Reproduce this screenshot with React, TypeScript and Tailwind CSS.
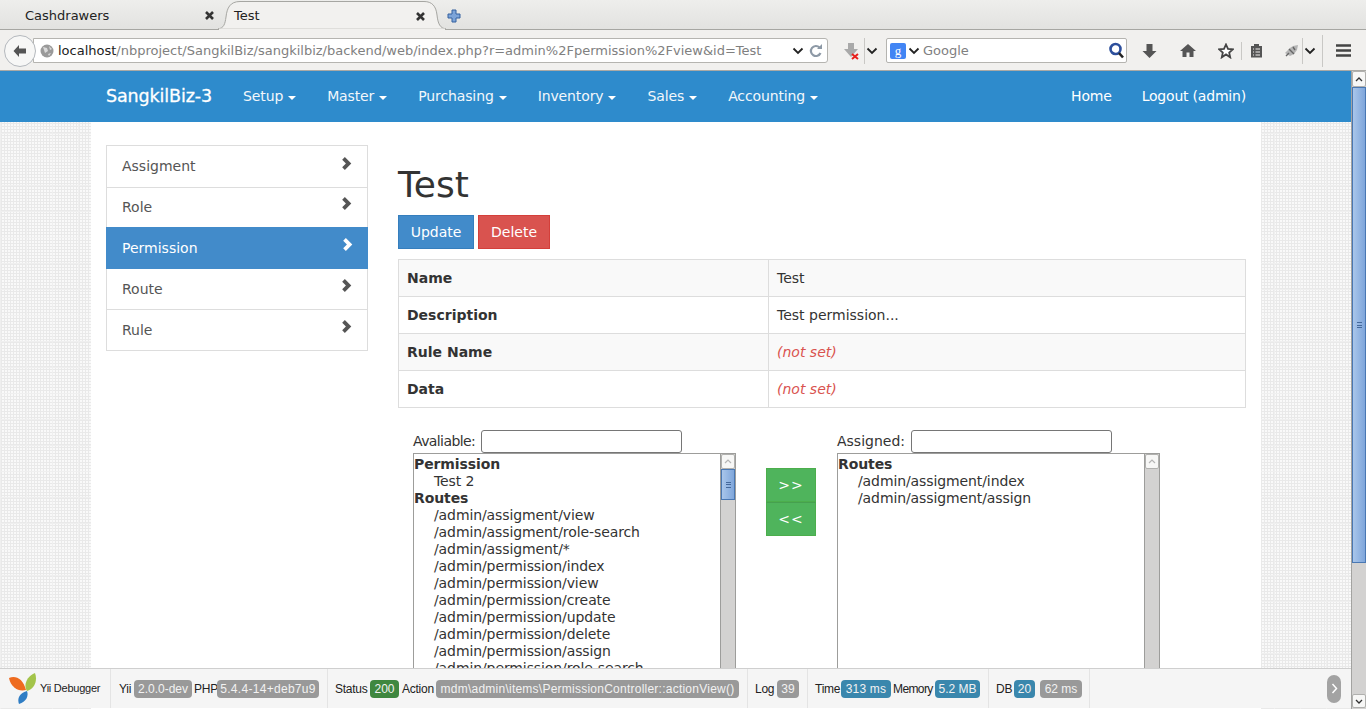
import type { ReactNode } from "react";

const menus = ["Setup", "Master", "Purchasing", "Inventory", "Sales", "Accounting"];
const sideItems = ["Assigment", "Role", "Permission", "Route", "Rule"];
const routes = [
  "/admin/assigment/view",
  "/admin/assigment/role-search",
  "/admin/assigment/*",
  "/admin/permission/index",
  "/admin/permission/view",
  "/admin/permission/create",
  "/admin/permission/update",
  "/admin/permission/delete",
  "/admin/permission/assign",
  "/admin/permission/role-search",
];

function CloseX() {
  return (
    <svg width="11" height="11" viewBox="0 0 11 11" className="shrink-0">
      <path d="M2 2l7 7M9 2l-7 7" stroke="#333" strokeWidth="2.6" />
    </svg>
  );
}

function Chevron({ color }: { color: string }) {
  return (
    <svg width="12" height="15" viewBox="0 0 11 14" className="mt-[-7px] mr-[-1px]">
      <path d="M1 3.500L3.500 1l6 6-6 6L1 10.500 4.500 7z" fill={color} />
    </svg>
  );
}

function DropArrow() {
  return (
    <svg width="12" height="8" viewBox="0 0 12 8">
      <path d="M1.500 1.500L6 6l4.500-4.500" stroke="#222" strokeWidth="1.800" fill="none" />
    </svg>
  );
}

function TabStrip() {
  return (
    <div className="h-[30px] flex items-stretch bg-[linear-gradient(#eeeeec,#e2e2e0)] border-b border-[#a6a6a2] text-[13px] text-[#222]">
      <div className="w-[218px] pl-[25px] pr-[3px] flex items-center justify-between pt-[2px]">
        <span>Cashdrawers</span>
        <CloseX />
      </div>
      <div className="relative w-[228px] h-[30px] pl-[16px] pr-[20px] flex items-center justify-between pt-[2px]">
        <svg width="228" height="30" viewBox="0 0 228 30" className="absolute left-0 top-0">
          <path d="M0 29C6 28 7 24 8 17 9 8 12 1.500 22 1.500H206C214 1.500 218 6 219 15 220 24 222 28 228 29z" fill="#f2f1ef" stroke="#a6a6a2" />
          <path d="M1 29.500H227" stroke="#f1f0ee" strokeWidth="2" />
        </svg>
        <span className="relative">Test</span>
        <span className="relative flex"><CloseX /></span>
      </div>
      <div className="ml-[1px] flex items-center pt-[2px]">
        <svg width="14" height="14" viewBox="0 0 14 14">
          <path d="M5 1h4v4h4v4H9v4H5V9H1V5h4z" fill="#7da4d8" stroke="#34609f" strokeWidth="1" />
        </svg>
      </div>
    </div>
  );
}

function Toolbar() {
  return (
    <div className="h-[41px] flex items-center bg-[#f1f0ee] border-b border-[#aaa9a5] pl-[4px] pt-[1px] text-[13px]">
      <div className="z-10 w-[32px] h-[32px] rounded-full bg-[#f7f7f6] border border-[#b4b8bd] flex items-center justify-center shrink-0">
        <svg width="16" height="14" viewBox="0 0 16 14">
          <path d="M7 1L1.500 7 7 13V9.500h7v-5H7z" fill="#555" />
        </svg>
      </div>
      <div className="ml-[-3px] w-[795px] h-[25px] bg-white border border-[#b5b4b0] rounded-r-[3px] flex items-center pl-[6px] pr-[4px] text-[#808080] whitespace-nowrap">
        <svg width="14" height="14" viewBox="0 0 14 14" className="shrink-0 mr-[4px]">
          <circle cx="7" cy="7" r="6.500" fill="#9a9a9a" />
          <path d="M3 3l4 1 1 3-3 2zM9 2l3 3-2 1zM8 10l3-1-2 3z" fill="#dadada" />
        </svg>
        <span className="text-[#222]">localhost</span>
        <span>/nbproject/SangkilBiz/sangkilbiz/backend/web/index.php?r=admin%2Fpermission%2Fview&amp;id=Test</span>
        <div className="ml-auto flex items-center gap-[5px]">
          <DropArrow />
          <svg width="14" height="14" viewBox="0 0 14 14">
            <path d="M11.500 9A5 5 0 1 1 10.500 3.500" stroke="#8d99a6" strokeWidth="2.200" fill="none" />
            <path d="M8 5h5V0z" fill="#8d99a6" />
          </svg>
        </div>
      </div>
      <svg width="18" height="18" viewBox="0 0 18 18" className="ml-[14px] shrink-0">
        <path d="M6 1h6v6h4l-7 8-7-8h4z" fill="#a9a9a9" />
        <path d="M10 12l6 5M16 12l-6 5" stroke="#e8201c" strokeWidth="2" />
      </svg>
      <div className="ml-[4px] h-[26px] border-l border-[#c9c8c5] pl-[1px] flex items-center"><DropArrow /></div>
      <div className="ml-[8px] w-[241px] h-[25px] bg-white border border-[#b5b4b0] rounded-[2px] flex items-center pl-[3px] pr-[1px] text-[#808080] shrink-0">
        <div className="w-[16px] h-[16px] rounded-[2px] bg-[#4285f4] text-white text-[13px] leading-[15px] text-center font-['Liberation_Serif',serif]">g</div>
        <div className="ml-[2px] mr-[3px] flex"><DropArrow /></div>
        <span className="text-[13px]">Google</span>
        <svg width="17" height="17" viewBox="0 0 16 17" className="ml-auto">
          <circle cx="7" cy="7" r="5" fill="#fff" stroke="#2d4f9c" strokeWidth="2.600" />
          <path d="M10.500 11l4 4.500" stroke="#222" strokeWidth="2.600" />
        </svg>
      </div>
      <svg width="15" height="16" viewBox="0 0 14 16" className="ml-[15px] shrink-0">
        <path d="M4 1h6v7h4l-7 7-7-7h4z" fill="#555" />
      </svg>
      <svg width="16" height="15" viewBox="0 0 16 15" className="ml-[23px] shrink-0">
        <path d="M8 1L0 8h2.500v6h4V9.500h3V14h4V8H16z" fill="#555" />
      </svg>
      <svg width="16" height="16" viewBox="0 0 16 16" className="ml-[22px] shrink-0">
        <path d="M8 1.500l2 4.400 4.800.5-3.600 3.200 1 4.700L8 11.400l-4.200 2.900 1-4.700L1.200 6.400 6 5.900z" fill="#fff" stroke="#444" strokeWidth="1.800" />
      </svg>
      <div className="ml-[7px] h-[18px] border-l border-[#c9c8c5]" />
      <svg width="13" height="15" viewBox="0 0 13 15" className="ml-[8px] shrink-0">
        <path d="M1 3h3V1h5v2h3v11.500H1z" fill="#555" />
        <path d="M3 6h1M3 9h1M3 12h1M5.500 6H10M5.500 9H10M5.500 12H10" stroke="#f1f0ee" strokeWidth="1.200" />
      </svg>
      <svg width="16" height="14" viewBox="0 0 16 14" className="ml-[21px] shrink-0">
        <path d="M1 9l5-5 3-2 5-1-1 5-3 4-4 2z" fill="#b4b4b4" />
        <path d="M5 5l5 5M9 3l2 3M2 12l3-3" stroke="#666" strokeWidth="1.400" />
      </svg>
      <div className="ml-[2px] h-[26px] border-l border-[#c9c8c5] pl-[1px] flex items-center"><DropArrow /></div>
      <div className="ml-[6px] h-[32px] border-l border-[#c9c8c5]" />
      <svg width="15" height="13" viewBox="0 0 15 13" className="ml-[13px] shrink-0">
        <path d="M0 1.500h15M0 6.500h15M0 11.500h15" stroke="#444" strokeWidth="2.600" />
      </svg>
    </div>
  );
}

function Navbar() {
  return (
    <div className="h-[51px] bg-[#2e8bcc] flex items-center pl-[106px] pr-[105px] text-[14px] tracking-[-0.12px] text-white">
      <span className="w-[137px] shrink-0 text-[17.500px] [-webkit-text-stroke:0.3px_white]">SangkilBiz-3</span>
      <div className="flex gap-[31px]">
        {menus.map((m) => (
          <div key={m} className="flex items-center gap-[5px]">
            <span className="text-[#f2f7fb]">{m}</span>
            <span className="w-0 h-0 border-x-[4px] border-x-transparent border-t-[4px] border-t-white mt-[2px]" />
          </div>
        ))}
      </div>
      <div className="ml-auto flex gap-[30px] tracking-[-0.2px]">
        <span>Home</span>
        <span>Logout (admin)</span>
      </div>
    </div>
  );
}

function Sidebar() {
  return (
    <div className="w-[262px] mt-[23px] shrink-0 self-start border border-[#dddddd] text-[14px]">
      {sideItems.map((s, i) => {
        const active = s === "Permission";
        return (
          <div
            key={s}
            className={
              active
                ? "h-[42px] my-[-1px] mx-[-1px] relative flex items-center justify-between pl-[16px] pr-[15px] bg-[#428bca] text-white"
                : `h-[41px] flex items-center justify-between pl-[15px] pr-[15px] text-[#555555] ${i > 0 ? "border-t border-[#dddddd]" : ""} ${i === 1 ? "pb-[2px]" : ""}`
            }
          >
            <span>{s}</span>
            <Chevron color={active ? "#ffffff" : "#555555"} />
          </div>
        );
      })}
    </div>
  );
}

function DetailRow({ label, children, odd }: { label: string; children: ReactNode; odd: boolean }) {
  return (
    <div className={`h-[37px] first:h-[36px] flex items-center border-t border-[#dddddd] first:border-t-0 ${odd ? "bg-[#f9f9f9]" : "bg-white"}`}>
      <div className="w-[370px] h-full flex items-center pl-[8px] font-bold border-r border-[#dddddd] shrink-0">{label}</div>
      <div className="pl-[8px]">{children}</div>
    </div>
  );
}

function NotSet() {
  return <span className="italic text-[#d9534f]">(not set)</span>;
}

function ListScroll({ thumb }: { thumb: boolean }) {
  return (
    <div className="w-[15px] shrink-0 h-full bg-[#d3d2d1] border-l border-[#9d9d9b] flex flex-col">
      <div className="h-[15px] bg-[#f7f7f6] border border-[#b0b0ae] rounded-[2px] flex items-center justify-center shrink-0">
        <svg width="8" height="5" viewBox="0 0 8 5">
          <path d="M1 4l3-3 3 3" stroke="#b5b5b5" strokeWidth="1.200" fill="none" />
        </svg>
      </div>
      {thumb && (
        <div className="h-[31px] bg-[linear-gradient(90deg,#a9c6ea,#7fa6db)] border border-[#4a78b3] flex items-center justify-center shrink-0">
          <div className="w-[5px] h-[6px] border-y border-[#45699b] flex items-center">
            <div className="w-full border-t border-[#45699b]" />
          </div>
        </div>
      )}
    </div>
  );
}

function ListBox({ children, thumb }: { children: ReactNode; thumb: boolean }) {
  return (
    <div className="w-[323px] h-[240px] border border-[#9d9d9b] flex overflow-hidden bg-white">
      <div className="flex-1 text-[14px] leading-[17px] tracking-[-0.1px] text-[#333] pt-[2px]">{children}</div>
      <ListScroll thumb={thumb} />
    </div>
  );
}

function DualList() {
  return (
    <div className="flex mt-[21px] pl-[15px] text-[14px] text-[#333]">
      <div className="w-[323px]">
        <div className="h-[24px] flex items-center">
          <span className="w-[68px] tracking-[-0.6px]">Avaliable:</span>
          <div className="w-[201px] h-[23px] border border-[#767676] rounded-[3px] bg-white" />
        </div>
        <ListBox thumb>
          <div className="font-bold">Permission</div>
          <div className="pl-[20px]">Test 2</div>
          <div className="font-bold">Routes</div>
          {routes.map((r) => (
            <div key={r} className="pl-[20px]">{r}</div>
          ))}
        </ListBox>
      </div>
      <div className="w-[50px] ml-[30px] mt-[39px] flex flex-col text-white text-[14px] shrink-0">
        <div className="h-[34px] bg-[#4fb45c] border border-[#4cae4c] flex items-center justify-center tracking-[1px]">&gt;&gt;</div>
        <div className="h-[34px] bg-[#4fb45c] border border-[#4cae4c] border-t-[#46a04f] flex items-center justify-center tracking-[1px]">&lt;&lt;</div>
      </div>
      <div className="w-[323px] ml-[21px]">
        <div className="h-[24px] flex items-center">
          <span>Assigned:</span>
          <div className="ml-[6px] w-[201px] h-[23px] border border-[#767676] rounded-[3px] bg-white" />
        </div>
        <ListBox thumb={false}>
          <div className="font-bold">Routes</div>
          <div className="pl-[20px]">/admin/assigment/index</div>
          <div className="pl-[20px]">/admin/assigment/assign</div>
        </ListBox>
      </div>
    </div>
  );
}

function Content() {
  return (
    <div className="w-[848px] ml-[30px] text-[14px] text-[#333]">
      <h1 className="text-[36px] leading-[40px] mt-[43px] font-normal">Test</h1>
      <div className="flex gap-[4px] mt-[10px]">
        <div className="w-[76px] h-[34px] bg-[#428bca] border border-[#357ebd] text-white flex items-center justify-center">Update</div>
        <div className="w-[72px] h-[34px] bg-[#d9534f] border border-[#d43f3a] text-white flex items-center justify-center">Delete</div>
      </div>
      <div className="mt-[10px] border border-[#dddddd]">
        <DetailRow label="Name" odd>Test</DetailRow>
        <DetailRow label="Description" odd={false}>Test permission...</DetailRow>
        <DetailRow label="Rule Name" odd><NotSet /></DetailRow>
        <DetailRow label="Data" odd={false}><NotSet /></DetailRow>
      </div>
      <DualList />
    </div>
  );
}

function PageScrollbar() {
  return (
    <div className="w-[15px] shrink-0 bg-[#d3d2d1] border-l border-[#a3a3a1] flex flex-col pb-[1px]">
      <div className="h-[16px] bg-[#f7f7f6] border border-[#b0b0ae] rounded-[2px] flex items-center justify-center shrink-0">
        <svg width="8" height="5" viewBox="0 0 8 5">
          <path d="M1 4l3-3 3 3" stroke="#333" strokeWidth="1.300" fill="none" />
        </svg>
      </div>
      <div className="h-[476px] bg-[linear-gradient(90deg,#a9c6ea,#7fa6db)] border border-[#4a78b3] flex items-center justify-center">
        <div className="w-[5px] h-[6px] border-y border-[#45699b] flex items-center">
          <div className="w-full border-t border-[#45699b]" />
        </div>
      </div>
      <div className="mt-auto h-[14px] bg-[#f7f7f6] border border-[#b0b0ae] rounded-[2px] flex items-center justify-center shrink-0">
        <svg width="8" height="5" viewBox="0 0 8 5">
          <path d="M1 1l3 3 3-3" stroke="#333" strokeWidth="1.300" fill="none" />
        </svg>
      </div>
    </div>
  );
}

function Badge({ children, color = "gray", className = "" }: { children: ReactNode; color?: "gray" | "green" | "blue"; className?: string }) {
  const bg = color === "green" ? "bg-[#3f873f]" : color === "blue" ? "bg-[#3a87ad]" : "bg-[#999999]";
  return <span className={`${bg} ${className} text-[#f2f2f2] text-center rounded-[4px] h-[18px] leading-[18px] inline-block shrink-0`}>{children}</span>;
}

function YiiLogo() {
  return (
    <svg width="28" height="31" viewBox="0 0 28 31" className="shrink-0">
      <path d="M0 5C6 2 14 5 17 17 10 19 2 15 0 5z" fill="#ee6b1f" />
      <path d="M26 0c3 8-1 16-8 18-4-6 0-15 8-18z" fill="#a3c44a" />
      <path d="M10 31c-2-5 0-11 8-13 2 5-1 11-8 13z" fill="#2f7dc4" />
    </svg>
  );
}

function DebugBar() {
  return (
    <div className="absolute left-0 right-[15px] bottom-[1px] h-[40px] bg-[#f5f5f5] border-t border-[#cfcfcf] flex items-center font-['Liberation_Sans',sans-serif] text-[12px] tracking-[-0.25px] text-[#222] whitespace-nowrap">
      <div className="w-[111px] h-full pl-[9px] flex items-center gap-[3px] border-r border-[#e4e4e4] shrink-0">
        <YiiLogo />
        <span className="text-[11px]">Yii Debugger</span>
      </div>
      <div className="w-[217px] h-full pl-[8px] flex items-center border-r border-[#e4e4e4] shrink-0">
        <span className="w-[15px]">Yii</span>
        <Badge className="w-[58px] tracking-[0px]">2.0.0-dev</Badge>
        <span className="w-[25px] pl-[2px]">PHP</span>
        <Badge className="w-[102px] tracking-[0.3px]">5.4.4-14+deb7u9</Badge>
      </div>
      <div className="w-[420px] h-full pl-[7px] flex items-center border-r border-[#e4e4e4] shrink-0">
        <span className="w-[35px]">Status</span>
        <Badge color="green" className="w-[29px] tracking-[0px]">200</Badge>
        <span className="w-[37px] pl-[3px]">Action</span>
        <Badge className="w-[303px] tracking-[0.24px]">mdm\admin\items\PermissionController::actionView()</Badge>
      </div>
      <div className="w-[60px] h-full pl-[7px] flex items-center border-r border-[#e4e4e4] shrink-0">
        <span className="w-[22px]">Log</span>
        <Badge className="w-[22px] tracking-[0px]">39</Badge>
      </div>
      <div className="w-[181px] h-full pl-[7px] flex items-center border-r border-[#e4e4e4] shrink-0">
        <span className="w-[26px]">Time</span>
        <Badge color="blue" className="w-[50px] tracking-[0.2px]">313 ms</Badge>
        <span className="w-[44px] pl-[2px] tracking-[-0.6px]">Memory</span>
        <Badge color="blue" className="w-[45px] tracking-[0px]">5.2 MB</Badge>
      </div>
      <div className="w-[101px] h-full pl-[7px] flex items-center border-r border-[#e4e4e4] shrink-0">
        <span className="w-[18px]">DB</span>
        <Badge color="blue" className="w-[21px] tracking-[0px]">20</Badge>
        <Badge className="w-[42px] ml-[5px] tracking-[0px]">62 ms</Badge>
      </div>
      <div className="ml-auto mr-[10px] w-[14px] h-[28px] rounded-[7px] bg-[#a3a3a3] flex items-center justify-center">
        <svg width="7" height="11" viewBox="0 0 7 11">
          <path d="M1.500 1l4 4.500-4 4.500" stroke="#fff" strokeWidth="1.500" fill="none" />
        </svg>
      </div>
    </div>
  );
}

export default function App() {
  return (
    <div className="relative w-[1366px] h-[709px] overflow-hidden flex flex-col bg-white font-['DejaVu_Sans',sans-serif]">
      <TabStrip />
      <Toolbar />
      <div className="flex-1 flex min-h-0">
        <div className="flex-1 min-w-0 flex flex-col bg-[#f9f9f9] bg-[linear-gradient(#efefef_1px,transparent_1px),linear-gradient(90deg,#efefef_1px,transparent_1px),radial-gradient(#e9e9e9_1px,transparent_1.200px)] bg-[length:26px_26px,26px_26px,3px_3px] bg-[position:0_10px,0_0,0_0]">
          <Navbar />
          <div className="w-[1170px] ml-[91px] flex-1 min-h-0 bg-white pl-[15px] flex items-start overflow-hidden">
            <Sidebar />
            <Content />
          </div>
        </div>
        <PageScrollbar />
      </div>
      <DebugBar />
    </div>
  );
}
